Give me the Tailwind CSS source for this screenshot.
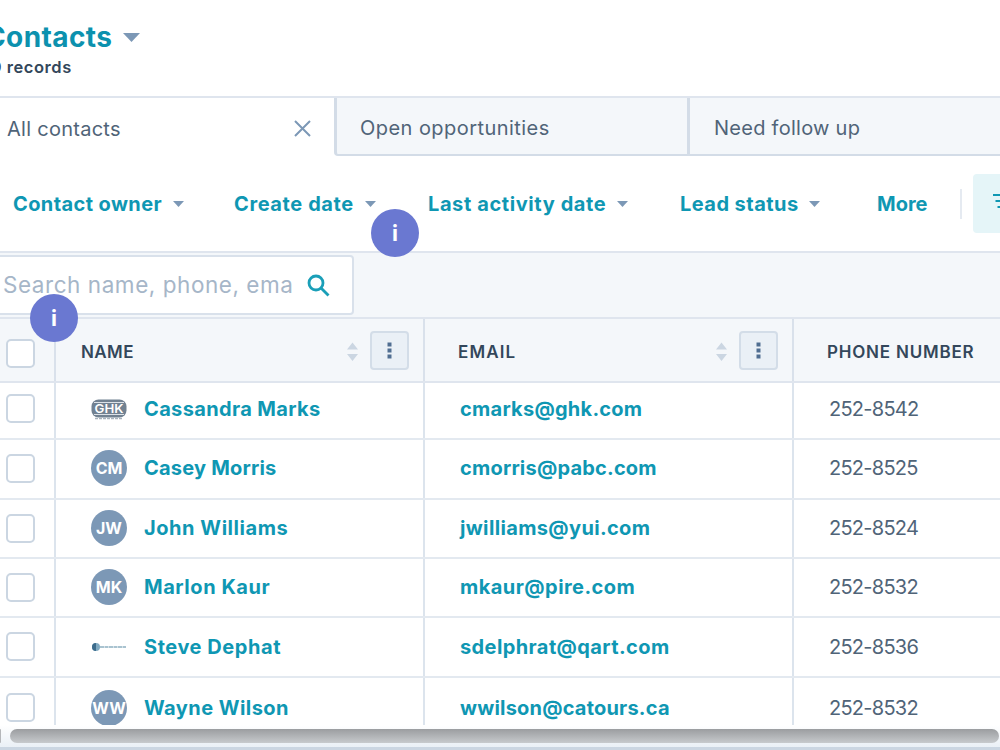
<!DOCTYPE html>
<html lang="en">
<head>
  <meta charset="UTF-8" />
  <title>Contacts</title>
  <script src="https://cdn.jsdelivr.net/npm/@tailwindcss/browser@4"></script>
</head>

<body class="w-[1000px] h-[750px] overflow-hidden bg-white font-['Inter',sans-serif] text-[#33475b]">
  <div class="relative flex flex-col w-[1000px] h-[750px] overflow-hidden">

    <!-- Title -->
    <header class="h-24 shrink-0 pt-[19px]">
      <div class="flex items-center h-9 -ml-[15px]">
        <h1 class="w-[128px] whitespace-nowrap text-[28px] font-bold tracking-[0.4px] text-[#0c91ae]">Contacts</h1>
        <svg class="ml-[10px]" width="17" height="9" viewBox="0 0 17 9"><path d="M0 0h17L8.500 9z" fill="#7c98b6"/></svg>
      </div>
      <p class="-ml-[9px] h-6 whitespace-nowrap text-[16.500px] leading-6 font-semibold tracking-[0.550px]">9 records</p>
    </header>

    <!-- Tabs -->
    <nav class="flex h-[60px] shrink-0 border-t-2 border-[#dfe5ee] text-[20px] text-[#506478]">
      <div class="flex w-[334px] items-center justify-between pl-[7px] pr-[23px] pt-[3px]">
        <span class="tracking-[0.270px]">All contacts</span>
        <svg width="17" height="17" viewBox="0 0 17 17" fill="none" stroke="#7c98b6" stroke-width="2"><path d="M1 1l15 15M16 1L1 16"/></svg>
      </div>
      <div class="flex w-[353px] items-center rounded-bl border-b-2 border-l-[3px] border-[#d3dce7] bg-[#f4f7fa] pl-[23px] pt-[3px] tracking-[0.450px]">Open opportunities</div>
      <div class="flex flex-1 items-center border-b-2 border-l-[3px] border-[#d3dce7] bg-[#f4f7fa] pl-[24px] pt-[3px] tracking-[0.270px]">Need follow up</div>
    </nav>

    <!-- Filters -->
    <div class="flex h-[97px] shrink-0 items-center border-b-2 border-[#dfe5ee] pl-[13px] text-[20px] font-bold text-[#0f97b3]">
      <div class="flex w-[221px] shrink-0 items-center whitespace-nowrap">
        <span class="w-[160px] tracking-[0.400px]">Contact owner</span>
        <svg width="11" height="6" viewBox="0 0 11 6"><path d="M0 0h11L5.500 6z" fill="#7c98b6"/></svg>
      </div>
      <div class="flex w-[194px] shrink-0 items-center whitespace-nowrap">
        <span class="w-[131px] tracking-[0.600px]">Create date</span>
        <svg width="11" height="6" viewBox="0 0 11 6"><path d="M0 0h11L5.500 6z" fill="#7c98b6"/></svg>
      </div>
      <div class="flex w-[252px] shrink-0 items-center whitespace-nowrap">
        <span class="w-[189px] tracking-[0.600px]">Last activity date</span>
        <svg width="11" height="6" viewBox="0 0 11 6"><path d="M0 0h11L5.500 6z" fill="#7c98b6"/></svg>
      </div>
      <div class="flex w-[197px] shrink-0 items-center whitespace-nowrap">
        <span class="w-[129px] tracking-[0.450px]">Lead status</span>
        <svg width="11" height="6" viewBox="0 0 11 6"><path d="M0 0h11L5.500 6z" fill="#7c98b6"/></svg>
      </div>
      <span class="w-[83px] shrink-0">More</span>
      <div class="h-[30px] w-[2px] shrink-0 bg-[#e5eaf1]"></div>
      <div class="ml-[11px] flex h-[59px] flex-1 items-center overflow-hidden rounded-l bg-[#e5f5f8] pl-[20px]">
        <svg class="mb-1 shrink-0" width="20" height="18" viewBox="0 0 20 18" stroke="#0f97b3" stroke-width="2.200"><path d="M0 2h20M2.500 8h15M4.500 14h10"/></svg>
      </div>
    </div>

    <!-- Search -->
    <div class="h-[66px] shrink-0 border-b-2 border-[#dfe5ee] bg-[#f4f7fa] pt-[2px]">
      <div class="flex h-[60px] w-[354px] items-center rounded-r border-2 border-l-0 border-[#d9e1eb] bg-white pl-[3px]">
        <span class="w-[304px] whitespace-nowrap text-[22.500px] tracking-[0.550px] text-[#a6b6c8]">Search name, phone, ema</span>
        <svg width="23" height="23" viewBox="0 0 23 23" fill="none" stroke="#1a9fb8" stroke-width="2.800"><circle cx="9" cy="9" r="7"/><path d="M14 14l7.500 7.500"/></svg>
      </div>
    </div>

    <!-- Table header -->
    <div class="grid h-[64px] shrink-0 grid-cols-[56px_369px_369px_1fr] border-b-2 border-[#dfe5ee] bg-[#f4f7fa] text-[17px] font-semibold">
      <div class="flex items-center border-r-2 border-[#d9e1eb] pl-[6px] pt-[6px]"><span class="size-[29px] rounded-[5px] border-2 border-[#cbd6e2] bg-white"></span></div>
      <div class="flex items-center border-r-2 border-[#d9e1eb] pl-[25px]">
        <span class="flex-1 pt-[5px] tracking-[0.400px]">NAME</span>
        <svg class="mt-[3px] mr-[12px]" width="11" height="19" viewBox="0 0 11 19" fill="#cbd6e2"><path d="M0 7.500L5.500 0.500l5.500 7zM0 12h11l-5.500 7z"/></svg>
        <span class="mr-[14px] flex size-[39px] items-center justify-center rounded border-2 border-[#d3dde8] bg-[#eaf0f6]"><svg width="5" height="17" viewBox="0 0 5 17" fill="#506e91"><path d="M0.500 0.500h4v4h-4zM0.500 6.500h4v4h-4zM0.500 12.500h4v4h-4z"/></svg></span>
      </div>
      <div class="flex items-center border-r-2 border-[#d9e1eb] pl-[33px]">
        <span class="flex-1 pt-[5px] tracking-[1.100px]">EMAIL</span>
        <svg class="mt-[3px] mr-[12px]" width="11" height="19" viewBox="0 0 11 19" fill="#cbd6e2"><path d="M0 7.500L5.500 0.500l5.500 7zM0 12h11l-5.500 7z"/></svg>
        <span class="mr-[14px] flex size-[39px] items-center justify-center rounded border-2 border-[#d3dde8] bg-[#eaf0f6]"><svg width="5" height="17" viewBox="0 0 5 17" fill="#506e91"><path d="M0.500 0.500h4v4h-4zM0.500 6.500h4v4h-4zM0.500 12.500h4v4h-4z"/></svg></span>
      </div>
      <div class="flex items-center whitespace-nowrap pl-[33px] pt-[5px] tracking-[0.800px]">PHONE NUMBER</div>
    </div>

    <!-- Table rows -->
    <div class="h-[342px] shrink-0 overflow-hidden text-[20px]">
      <div class="grid h-[57px] grid-cols-[56px_369px_369px_1fr] border-b-2 border-[#e3e9f0]">
        <div class="flex items-center border-r-2 border-[#dce4ed] pl-[6px] pb-[4px]"><span class="size-[29px] rounded-[5px] border-2 border-[#cbd6e2]"></span></div>
        <div class="flex items-center border-r-2 border-[#dce4ed] pl-[35px] pb-[3px] font-bold text-[#0f97b3]">
          <svg class="mr-[17px]" width="36" height="22" viewBox="0 0 36 22"><rect x="0.500" y="1.500" width="35" height="18" rx="7" fill="#718191"/><path d="M3 4.500h30M3 16.500h30" stroke="#dde2e8" stroke-width="1"/><text x="18" y="15" text-anchor="middle" textLength="29" lengthAdjust="spacingAndGlyphs" font-size="12" font-weight="600" fill="#fff">GHK</text><path d="M4 20.500h28" stroke="#a8b2bd" stroke-width="1.500" stroke-dasharray="3 1"/></svg>
          <span class="tracking-[0.350px]">Cassandra Marks</span>
        </div>
        <div class="flex items-center border-r-2 border-[#dce4ed] pl-[35px] pb-[3px] font-bold tracking-[0.250px] text-[#0f97b3]">cmarks@ghk.com</div>
        <div class="flex items-center pl-[35px] pb-[3px] tracking-[-0.750px] text-[#506478]">252-8542</div>
      </div>
      <div class="grid h-[60px] grid-cols-[56px_369px_369px_1fr] border-b-2 border-[#e3e9f0]">
        <div class="flex items-center border-r-2 border-[#dce4ed] pl-[6px] pb-[2px]"><span class="size-[29px] rounded-[5px] border-2 border-[#cbd6e2]"></span></div>
        <div class="flex items-center border-r-2 border-[#dce4ed] pl-[35px] pb-[2px] font-bold text-[#0f97b3]">
          <span class="mr-[17px] flex size-9 items-center justify-center rounded-full bg-[#7c98b6] text-[16px] font-bold text-white">CM</span>
          <span class="tracking-[0.200px]">Casey Morris</span>
        </div>
        <div class="flex items-center border-r-2 border-[#dce4ed] pl-[35px] pb-[2px] font-bold tracking-[0.200px] text-[#0f97b3]">cmorris@pabc.com</div>
        <div class="flex items-center pl-[35px] pb-[2px] tracking-[-0.750px] text-[#506478]">252-8525</div>
      </div>
      <div class="grid h-[59px] grid-cols-[56px_369px_369px_1fr] border-b-2 border-[#e3e9f0]">
        <div class="flex items-center border-r-2 border-[#dce4ed] pl-[6px] pb-px"><span class="size-[29px] rounded-[5px] border-2 border-[#cbd6e2]"></span></div>
        <div class="flex items-center border-r-2 border-[#dce4ed] pl-[35px] pb-px font-bold text-[#0f97b3]">
          <span class="mr-[17px] flex size-9 items-center justify-center rounded-full bg-[#7c98b6] text-[16px] font-bold text-white">JW</span>
          <span class="tracking-[0.550px]">John Williams</span>
        </div>
        <div class="flex items-center border-r-2 border-[#dce4ed] pl-[35px] pb-px font-bold tracking-[0.350px] text-[#0f97b3]">jwilliams@yui.com</div>
        <div class="flex items-center pl-[35px] pb-px tracking-[-0.750px] text-[#506478]">252-8524</div>
      </div>
      <div class="grid h-[59px] grid-cols-[56px_369px_369px_1fr] border-b-2 border-[#e3e9f0]">
        <div class="flex items-center border-r-2 border-[#dce4ed] pl-[6px]"><span class="size-[29px] rounded-[5px] border-2 border-[#cbd6e2]"></span></div>
        <div class="flex items-center border-r-2 border-[#dce4ed] pl-[35px] pb-px font-bold text-[#0f97b3]">
          <span class="mr-[17px] flex size-9 items-center justify-center rounded-full bg-[#7c98b6] text-[16px] font-bold text-white">MK</span>
          <span class="tracking-[0.550px]">Marlon Kaur</span>
        </div>
        <div class="flex items-center border-r-2 border-[#dce4ed] pl-[35px] pb-px font-bold tracking-[0.450px] text-[#0f97b3]">mkaur@pire.com</div>
        <div class="flex items-center pl-[35px] pb-px tracking-[-0.750px] text-[#506478]">252-8532</div>
      </div>
      <div class="grid h-[60px] grid-cols-[56px_369px_369px_1fr] border-b-2 border-[#e3e9f0]">
        <div class="flex items-center border-r-2 border-[#dce4ed] pl-[6px] pb-px"><span class="size-[29px] rounded-[5px] border-2 border-[#cbd6e2]"></span></div>
        <div class="flex items-center border-r-2 border-[#dce4ed] pl-[35px] pb-px font-bold text-[#0f97b3]">
          <svg class="mr-[17px]" width="36" height="10" viewBox="0 0 36 10"><circle cx="5" cy="5" r="4" fill="#7fa9c1"/><path d="M5 1a4 4 0 0 0 0 8z" fill="#3d6c8c"/><path d="M9 5h26" stroke="#a9c3d0" stroke-width="2" stroke-dasharray="4 0.500"/></svg>
          <span class="tracking-[0.550px]">Steve Dephat</span>
        </div>
        <div class="flex items-center border-r-2 border-[#dce4ed] pl-[35px] pb-px font-bold tracking-[0.400px] text-[#0f97b3]">sdelphrat@qart.com</div>
        <div class="flex items-center pl-[35px] pb-px tracking-[-0.750px] text-[#506478]">252-8536</div>
      </div>
      <div class="grid h-[60px] grid-cols-[56px_369px_369px_1fr]">
        <div class="flex items-center border-r-2 border-[#dce4ed] pl-[6px] pb-[2px]"><span class="size-[29px] rounded-[5px] border-2 border-[#cbd6e2]"></span></div>
        <div class="flex items-center border-r-2 border-[#dce4ed] pl-[35px] pb-px font-bold text-[#0f97b3]">
          <span class="mr-[17px] flex size-9 items-center justify-center rounded-full bg-[#7c98b6] text-[16px] font-bold text-white">WW</span>
          <span class="tracking-[0.450px]">Wayne Wilson</span>
        </div>
        <div class="flex items-center border-r-2 border-[#dce4ed] pl-[35px] pb-px font-bold tracking-[0.200px] text-[#0f97b3]">wwilson@catours.ca</div>
        <div class="flex items-center pl-[35px] pb-px tracking-[-0.750px] text-[#506478]">252-8532</div>
      </div>
    </div>

    <!-- Horizontal scrollbar -->
    <div class="flex h-[25px] shrink-0 flex-col border-b-[3px] border-[#cbd6e2] bg-linear-to-b from-white to-[#eaf0f6] pt-1">
      <div class="flex gap-[9px]">
        <div class="h-[14px] w-px rounded-r bg-[#b5b7ba]"></div>
        <div class="h-[14px] w-[989px] rounded-full bg-linear-to-b from-[#9b9da0] to-[#c7cacd]"></div>
      </div>
    </div>

    <!-- Info markers -->
    <div class="absolute left-[371px] top-[209px] flex size-12 items-center justify-center rounded-full bg-[#6a78d1] text-[22px] font-bold text-white">i</div>
    <div class="absolute left-[30px] top-[294px] flex size-12 items-center justify-center rounded-full bg-[#6a78d1] text-[22px] font-bold text-white">i</div>
  </div>
</body>
</html>
